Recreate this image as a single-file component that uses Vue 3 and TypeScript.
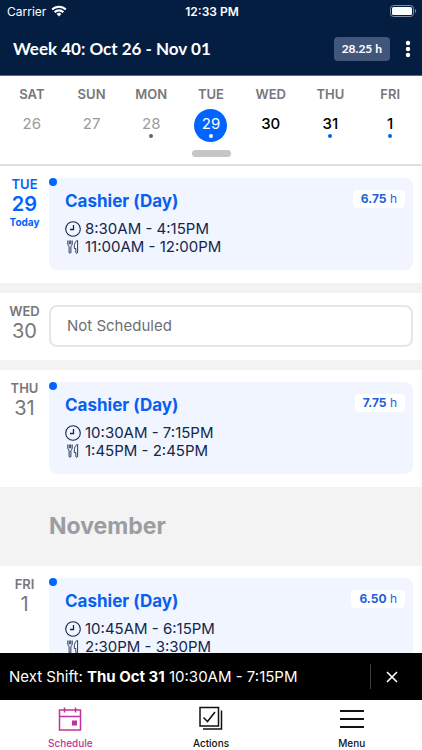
<script setup lang="ts">
interface WeekDay {
  name: string
  date: number
  state: 'past' | 'today' | 'future'
  shift: boolean
}

interface Shift {
  role: string
  time: string
  meal: string
  hours: string
}

interface DayEntry {
  name: string
  date: number
  today?: boolean
  month?: string
  shift?: Shift
}

const week: WeekDay[] = [
  { name: 'SAT', date: 26, state: 'past', shift: false },
  { name: 'SUN', date: 27, state: 'past', shift: false },
  { name: 'MON', date: 28, state: 'past', shift: true },
  { name: 'TUE', date: 29, state: 'today', shift: true },
  { name: 'WED', date: 30, state: 'future', shift: false },
  { name: 'THU', date: 31, state: 'future', shift: true },
  { name: 'FRI', date: 1, state: 'future', shift: true },
]

const days: DayEntry[] = [
  {
    name: 'TUE', date: 29, today: true,
    shift: { role: 'Cashier (Day)', time: '8:30AM - 4:15PM', meal: '11:00AM - 12:00PM', hours: '6.75' },
  },
  { name: 'WED', date: 30 },
  {
    name: 'THU', date: 31,
    shift: { role: 'Cashier (Day)', time: '10:30AM - 7:15PM', meal: '1:45PM - 2:45PM', hours: '7.75' },
  },
  {
    name: 'FRI', date: 1, month: 'November',
    shift: { role: 'Cashier (Day)', time: '10:45AM - 6:15PM', meal: '2:30PM - 3:30PM', hours: '6.50' },
  },
]
</script>

<template>
  <div class="app">
    <header class="header">
      <div class="status">
        <div class="carrier">
          <span>Carrier</span>
          <svg width="16" height="12" viewBox="0 0 16 12" fill="none" stroke="#fff" stroke-width="2.1">
            <path d="M1.2 4.6a9.6 9.6 0 0 1 13.6 0M3.6 7.2a6.2 6.2 0 0 1 8.8 0" />
            <path d="M5.6 8.9a3.4 3.4 0 0 1 4.8 0L8 11.4z" fill="#fff" stroke="none" />
          </svg>
        </div>
        <span class="clock">12:33 PM</span>
        <svg class="battery" width="27" height="12" viewBox="0 0 27 12">
          <rect x="0.5" y="0.5" width="23" height="11" rx="3" fill="none" stroke="#8590a4" />
          <rect x="2" y="2" width="20" height="8" rx="1.5" fill="#fff" />
          <path d="M25 4v4c1.6-.7 1.6-3.3 0-4z" fill="#8590a4" />
        </svg>
      </div>
      <div class="titlebar">
        <h1 class="title">Week 40: Oct 26 - Nov 01</h1>
        <span class="total">28.25 h</span>
        <button class="more" type="button" aria-label="More options">
          <svg width="6" height="18" viewBox="0 0 6 18" fill="#fff">
            <circle cx="3" cy="3" r="2.2" /><circle cx="3" cy="9" r="2.2" /><circle cx="3" cy="15" r="2.2" />
          </svg>
        </button>
      </div>
    </header>

    <nav class="week" aria-label="Week">
      <div class="week-days">
        <button v-for="day in week" :key="day.name" type="button" class="week-day" :class="day.state">
          <span class="week-name">{{ day.name }}</span>
          <span class="week-date">
            <span>{{ day.date }}</span>
            <i v-if="day.shift" class="mark"></i>
          </span>
        </button>
      </div>
      <div class="handle"></div>
    </nav>

    <main class="list">
      <template v-for="day in days" :key="day.name">
        <h2 v-if="day.month" class="month">{{ day.month }}</h2>
        <section class="day">
          <div class="day-label" :class="{ today: day.today }">
            <span class="day-name">{{ day.name }}</span>
            <span class="day-date">{{ day.date }}</span>
            <span v-if="day.today" class="day-note">Today</span>
          </div>
          <article v-if="day.shift" class="card">
            <i class="card-dot"></i>
            <div class="card-body">
              <h3 class="role">{{ day.shift.role }}</h3>
              <p class="line">
                <svg width="16" height="16" viewBox="0 0 16 16" fill="none" stroke="#14264b">
                  <circle cx="8" cy="8" r="7.3" stroke-width="1.1" />
                  <path d="M8.5 4v4.5H5" stroke-width="1.3" />
                </svg>
                <span>{{ day.shift.time }}</span>
              </p>
              <p class="line">
                <svg width="16" height="16" viewBox="0 0 16 16" fill="none" stroke="#14264b" stroke-width="0.9">
                  <path d="M2.800 1.500v3.600c0 1.200.5 1.800 1.300 2.200v5.900c0 1.400 1.800 1.400 1.800 0V7.300c.8-.4 1.300-1 1.300-2.200V1.500M4.300 1.500v3.800M5.700 1.500v3.800" />
                  <path d="M12.600 1.500v11.700c0 1.400-1.800 1.400-1.800 0V9.500H9.300c-.2-4 .7-7.500 3.300-8z" />
                </svg>
                <span>{{ day.shift.meal }}</span>
              </p>
            </div>
            <span class="hours"><b>{{ day.shift.hours }}</b> h</span>
          </article>
          <div v-else class="empty">Not Scheduled</div>
        </section>
      </template>
    </main>

    <aside class="next">
      <p class="next-text">Next Shift: <b>Thu Oct 31</b> 10:30AM - 7:15PM</p>
      <button class="close" type="button" aria-label="Dismiss">
        <svg width="12" height="12" viewBox="0 0 12 12" fill="none" stroke="#fff" stroke-width="1.6">
          <path d="M1 1l10 10M11 1L1 11" />
        </svg>
      </button>
    </aside>

    <nav class="tabs" aria-label="Main">
      <a href="#schedule" class="tab active">
        <svg width="26" height="26" viewBox="0 0 26 26" fill="none" stroke="currentColor" stroke-width="1.5">
          <path d="M2.500 4h21v20h-21zM2.500 10.500h21M7.500 1.500v5M18.500 1.500v5" />
          <rect x="15" y="14.5" width="5" height="5" fill="currentColor" stroke="none" />
        </svg>
        <span>Schedule</span>
      </a>
      <a href="#actions" class="tab">
        <svg width="26" height="26" viewBox="0 0 26 26" fill="none" stroke="currentColor" stroke-width="1.5">
          <path d="M2 1.500h18.500V20H2z" />
          <path d="M23.500 4.500V23H5" />
          <path d="M5.500 11.500l4 4 7.500-9.500" />
        </svg>
        <span>Actions</span>
      </a>
      <a href="#menu" class="tab">
        <svg width="26" height="26" viewBox="0 0 26 26" fill="none" stroke="currentColor" stroke-width="1.8">
          <path d="M1 5h24M1 13h24M1 21h24" />
        </svg>
        <span>Menu</span>
      </a>
    </nav>
  </div>
</template>

<style>
body {
  margin: 0;
}
</style>

<style scoped>
.app {
  display: flex;
  flex-direction: column;
  height: 100vh;
  overflow: hidden;
  background: #fff;
  color: #14264b;
  font-family: Inter, Roboto, sans-serif;
}
h1, h2, h3, p {
  margin: 0;
}
button {
  border: 0;
  padding: 0;
  background: none;
  color: inherit;
  font: inherit;
}
svg {
  display: block;
  flex: none;
}
.header {
  background: #041e42;
  color: #fff;
  border-bottom: 1px solid #5b6788;
}
.status {
  display: grid;
  grid-template-columns: 1fr auto 1fr;
  align-items: center;
  height: 22px;
  padding: 0 5px 0 7px;
  font-size: 12px;
}
.carrier {
  display: flex;
  align-items: center;
  gap: 5px;
}
.clock {
  font-weight: 600;
}
.battery {
  justify-self: end;
}
.titlebar {
  display: flex;
  align-items: center;
  height: 53px;
  padding: 0 8px 0 13px;
}
.title {
  flex: 1;
  font: 700 17px/24px Lato, sans-serif;
}
.total {
  padding: 0 8px;
  border-radius: 4px;
  background: #42567b;
  font: 700 12px/24px Lato, sans-serif;
}
.more {
  display: flex;
  justify-content: center;
  width: 12px;
  margin-left: 12px;
}
.week {
  border-bottom: 2px solid #e0e0e0;
  padding: 10px 2px 7px;
}
.week-days {
  display: grid;
  grid-template-columns: repeat(7, 1fr);
}
.week-day {
  display: flex;
  flex-direction: column;
  align-items: center;
  gap: 7px;
}
.week-name {
  color: #76777a;
  font-size: 13px;
  font-weight: 600;
  line-height: 16px;
}
.week-date {
  display: flex;
  flex-direction: column;
  align-items: center;
  width: 33px;
  height: 33px;
  border-radius: 50%;
  font-size: 15px;
  line-height: 29px;
  color: #000;
}
.future .week-date {
  font-weight: 500;
}
.past .week-date {
  color: #9b9b9b;
}
.today .week-date {
  background: #0064fe;
  color: #fff;
}
.mark {
  width: 4px;
  height: 4px;
  margin-top: -4px;
  border-radius: 50%;
  background: #0a5fe8;
}
.past .mark {
  background: #666;
}
.today .mark {
  background: #fff;
}
.handle {
  width: 39px;
  height: 7px;
  margin: 8px auto 0;
  border-radius: 4px;
  background: #c6c6c6;
}
.list {
  flex: 1;
  min-height: 0;
  overflow: hidden;
  background: #f3f3f3;
}
.day {
  display: flex;
  padding: 12px 9px 13px 0;
  background: #fff;
}
.day + .day {
  margin-top: 10px;
}
.day-label {
  display: flex;
  flex-direction: column;
  align-items: center;
  width: 49px;
  color: #76777a;
}
.day-name {
  font-size: 13px;
  font-weight: 600;
  line-height: 13px;
}
.day-date {
  font-size: 20px;
  line-height: 26px;
}
.day-note {
  font-size: 10px;
  font-weight: 700;
  line-height: 10px;
}
.today {
  color: #0064fe;
}
.day-label.today .day-date {
  font-weight: 600;
}
.card {
  position: relative;
  display: flex;
  flex: 1;
  align-items: flex-start;
  justify-content: space-between;
  padding: 12px 8px 14px 16px;
  border-radius: 8px;
  background: #f0f5ff;
}
.card-dot {
  position: absolute;
  top: 0;
  left: 0;
  width: 8px;
  height: 8px;
  border-radius: 50%;
  background: #0064fe;
}
.role {
  margin-bottom: 8px;
  color: #0a5ff0;
  font-size: 17px;
  font-weight: 700;
  line-height: 22px;
}
.line {
  display: flex;
  align-items: center;
  gap: 4px;
  font-size: 15px;
  line-height: 18px;
}
.hours {
  padding: 0 8px;
  border-radius: 4px;
  background: #fff;
  color: #1a63dc;
  font-size: 12px;
  line-height: 18px;
}
.hours b {
  font-weight: 700;
}
.empty {
  flex: 1;
  padding: 0 16px;
  border: 2px solid #e6e6e6;
  border-radius: 8px;
  color: #6d6e71;
  font-size: 15px;
  line-height: 38px;
}
.month {
  padding: 24px 49px;
  color: #9b9da0;
  font-size: 23px;
  font-weight: 700;
  line-height: 31px;
}
.next {
  display: flex;
  align-items: center;
  height: 47px;
  padding-left: 9px;
  background: #000;
  color: #fff;
}
.next-text {
  flex: 1;
  font-size: 15px;
}
.next-text b {
  font-weight: 700;
}
.close {
  display: flex;
  align-items: center;
  justify-content: center;
  width: 52px;
  height: 25px;
  padding-right: 9px;
  border-left: 1px solid #3c3c3c;
}
.tabs {
  display: grid;
  grid-template-columns: repeat(3, 1fr);
  height: 50px;
}
.tab {
  display: flex;
  flex-direction: column;
  align-items: center;
  gap: 4px;
  padding-top: 6px;
  color: #111;
  font-size: 10px;
  font-weight: 500;
  line-height: 14px;
  text-decoration: none;
}
.tab.active {
  color: #c1339a;
}
</style>
